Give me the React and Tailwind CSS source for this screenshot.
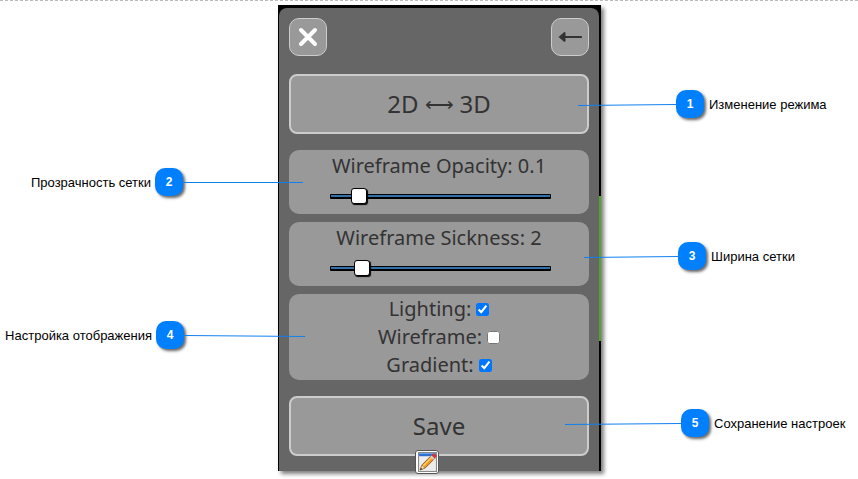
import { useState } from "react";

const comic = "font-['Comic_Sans_MS','Noto_Sans',sans-serif]";

const sliderClass =
  "block h-4 w-[221px] cursor-pointer appearance-none bg-transparent " +
  "[&::-webkit-slider-runnable-track]:box-border [&::-webkit-slider-runnable-track]:h-[5px] [&::-webkit-slider-runnable-track]:rounded-[1px] [&::-webkit-slider-runnable-track]:border [&::-webkit-slider-runnable-track]:border-b-2 [&::-webkit-slider-runnable-track]:border-black [&::-webkit-slider-runnable-track]:bg-[#3071a9] " +
  "[&::-webkit-slider-thumb]:-mt-[7px] [&::-webkit-slider-thumb]:size-4 [&::-webkit-slider-thumb]:appearance-none [&::-webkit-slider-thumb]:rounded-[3px] [&::-webkit-slider-thumb]:border [&::-webkit-slider-thumb]:border-black [&::-webkit-slider-thumb]:bg-white [&::-webkit-slider-thumb]:shadow-[1px_1px_1px_#000]";

function SliderCard({ id, label, min, max, step, initial }) {
  const [value, setValue] = useState(initial);
  return (
    <div className="flex h-16 flex-col items-center rounded-[10px] bg-[#999] pt-0.5">
      <label htmlFor={id} className="text-xl leading-7">
        {label}: {value}
      </label>
      <input
        id={id}
        type="range"
        min={min}
        max={max}
        step={step}
        value={value}
        onChange={(e) => setValue(e.target.value)}
        className={`mt-2 ml-[3px] ${sliderClass}`}
      />
    </div>
  );
}

function Check({ label, defaultChecked }) {
  return (
    <label className="flex h-7 items-center justify-center gap-[5px] text-xl leading-7">
      {label}:
      <input type="checkbox" defaultChecked={defaultChecked} className="size-[13px] accent-[#0075ff]" />
    </label>
  );
}

function Badge({ number, children }) {
  return (
    <span className="relative flex size-7 shrink-0 items-center justify-center rounded-[10px] bg-[#0080ff] text-xs font-bold text-white shadow-[2px_2px_3px_rgba(0,0,0,0.6)]">
      {number}
      {children}
    </span>
  );
}

function CalloutText({ children }) {
  return <span className="h-7 leading-[30px]">{children}</span>;
}

function Pointer({ width, className, y1, y2 }) {
  return (
    <svg width={width} height="4" className={`absolute top-3 z-10 max-w-none ${className}`} aria-hidden="true">
      <line x1="0" y1={y1} x2={width} y2={y2} stroke="#1080f0" strokeWidth="1" />
    </svg>
  );
}

function PencilIcon() {
  return (
    <svg width="19" height="20" viewBox="0 0 18 19" aria-hidden="true">
      <rect x="0.5" y="0.5" width="17" height="18" fill="#ececec" stroke="#888" />
      <rect x="1" y="1" width="16" height="3" fill="#2a6fd0" />
      <rect x="1" y="1" width="16" height="1" fill="#6ba5ec" />
      <path d="M2 17 L4 12 L13 3 L16 6 L7 15 Z" fill="#f09a20" stroke="#8a4a10" strokeWidth="0.8" />
      <path d="M5 13 L13.5 4.5" stroke="#ffd67a" strokeWidth="1.2" />
      <path d="M2 17 L3.7 12.5 L6.5 15.3 Z" fill="#f7dfb5" stroke="#8a6a40" strokeWidth="0.5" />
      <path d="M2 17 L2.8 15 L4.2 16.3 Z" fill="#333" />
      <path d="M12.2 3.8 L15.2 6.8" stroke="#ccd6e6" strokeWidth="1.5" />
      <path d="M13 3 L14.5 1.5 Q16 1 17 2.5 Q18 3.5 17.5 4.5 L16 6 Z" fill="#d2333c" />
    </svg>
  );
}

export default function App() {
  return (
    <main className="min-h-screen overflow-hidden border-t border-dashed border-[#bbb] bg-white font-['Liberation_Sans',Arial,sans-serif] text-[13px] leading-7 text-black">
      <div className="grid grid-cols-[minmax(0,278fr)_323px_minmax(0,257fr)] pt-1">
        <div className="flex flex-col items-end gap-[125px] pt-[163px]">
          <div className="flex gap-1 pr-[95px] whitespace-nowrap">
            <CalloutText>Прозрачность сетки</CalloutText>
            <Badge number={2}>
              <Pointer width={120} className="left-7" y1={2.5} y2={2.5} />
            </Badge>
          </div>
          <div className="flex gap-1 pr-[94px] whitespace-nowrap">
            <CalloutText>Настройка отображения</CalloutText>
            <Badge number={4}>
              <Pointer width={121} className="left-7" y1={2.5} y2={3.5} />
            </Badge>
          </div>
        </div>

        <section className={`relative bg-black pt-[3px] pr-0.5 pl-px text-[#333] shadow-[3px_3px_4px_rgba(0,0,0,0.5)] ${comic}`}>
          <div className="rounded-t-lg bg-[#666] px-2.5 pt-2.5 pb-[15px]">
            <div className="flex justify-between">
              <button aria-label="Close" className="flex size-[38px] items-center justify-center rounded-[10px] border border-[#ccc] bg-[#999]">
                <svg width="20" height="20" viewBox="0 0 20 20" aria-hidden="true">
                  <path d="M3 3 L17 17 M17 3 L3 17" stroke="#fff" strokeWidth="4" strokeLinecap="round" />
                </svg>
              </button>
              <button aria-label="Back" className="flex size-[38px] items-center justify-center rounded-[10px] border border-[#ccc] bg-[#999]">
                <svg width="24" height="12" viewBox="0 0 24 12" aria-hidden="true">
                  <path d="M5 6 H23" stroke="#333" strokeWidth="2.2" strokeLinecap="round" />
                  <path d="M0.5 6 L6 1.2 Q7.5 0.6 7.5 2.5 V9.5 Q7.5 11.4 6 10.8 Z" fill="#333" />
                </svg>
              </button>
            </div>
            <button className="mt-[18px] flex h-[60px] w-full items-center justify-center gap-1.5 rounded-lg border-2 border-[#ccc] bg-[#999] text-2xl">
              <span>2D</span>
              <span className="text-xl leading-7">⟷</span>
              <span>3D</span>
            </button>
            <div className="mt-4 flex flex-col gap-2">
              <SliderCard id="opacity" label="Wireframe Opacity" min={0} max={1} step={0.1} initial={0.1} />
              <SliderCard id="sickness" label="Wireframe Sickness" min={1} max={10} step={1} initial={2} />
              <div className="rounded-[10px] bg-[#999] py-px">
                <Check label="Lighting" defaultChecked />
                <Check label="Wireframe" />
                <Check label="Gradient" defaultChecked />
              </div>
            </div>
            <button className="mt-4 block h-[60px] w-full rounded-lg border-2 border-[#ccc] bg-[#999] text-2xl">Save</button>
          </div>
          <span className="absolute top-[191px] right-0 h-[145px] w-0.5 bg-[#4ea72a]" />
          <button aria-label="Edit" className="absolute -bottom-[3px] left-[137px] flex h-6 w-6 items-center justify-center rounded-[3px] border border-[#555] bg-white">
            <PencilIcon />
          </button>
        </section>

        <div className="flex flex-col items-start pt-[85px]">
          <div className="flex gap-[5px] pl-[75px] whitespace-nowrap">
            <Badge number={1}>
              <Pointer width={98} className="right-7" y1={3.5} y2={2.5} />
            </Badge>
            <CalloutText>Изменение режима</CalloutText>
          </div>
          <div className="mt-[124px] flex gap-[5px] pl-[77px] whitespace-nowrap">
            <Badge number={3}>
              <Pointer width={94} className="right-7" y1={3.5} y2={2.5} />
            </Badge>
            <CalloutText>Ширина сетки</CalloutText>
          </div>
          <div className="mt-[139px] flex gap-[5px] pl-20 whitespace-nowrap">
            <Badge number={5}>
              <Pointer width={116} className="right-7" y1={3.5} y2={2.5} />
            </Badge>
            <CalloutText>Сохранение настроек</CalloutText>
          </div>
        </div>
      </div>
    </main>
  );
}
